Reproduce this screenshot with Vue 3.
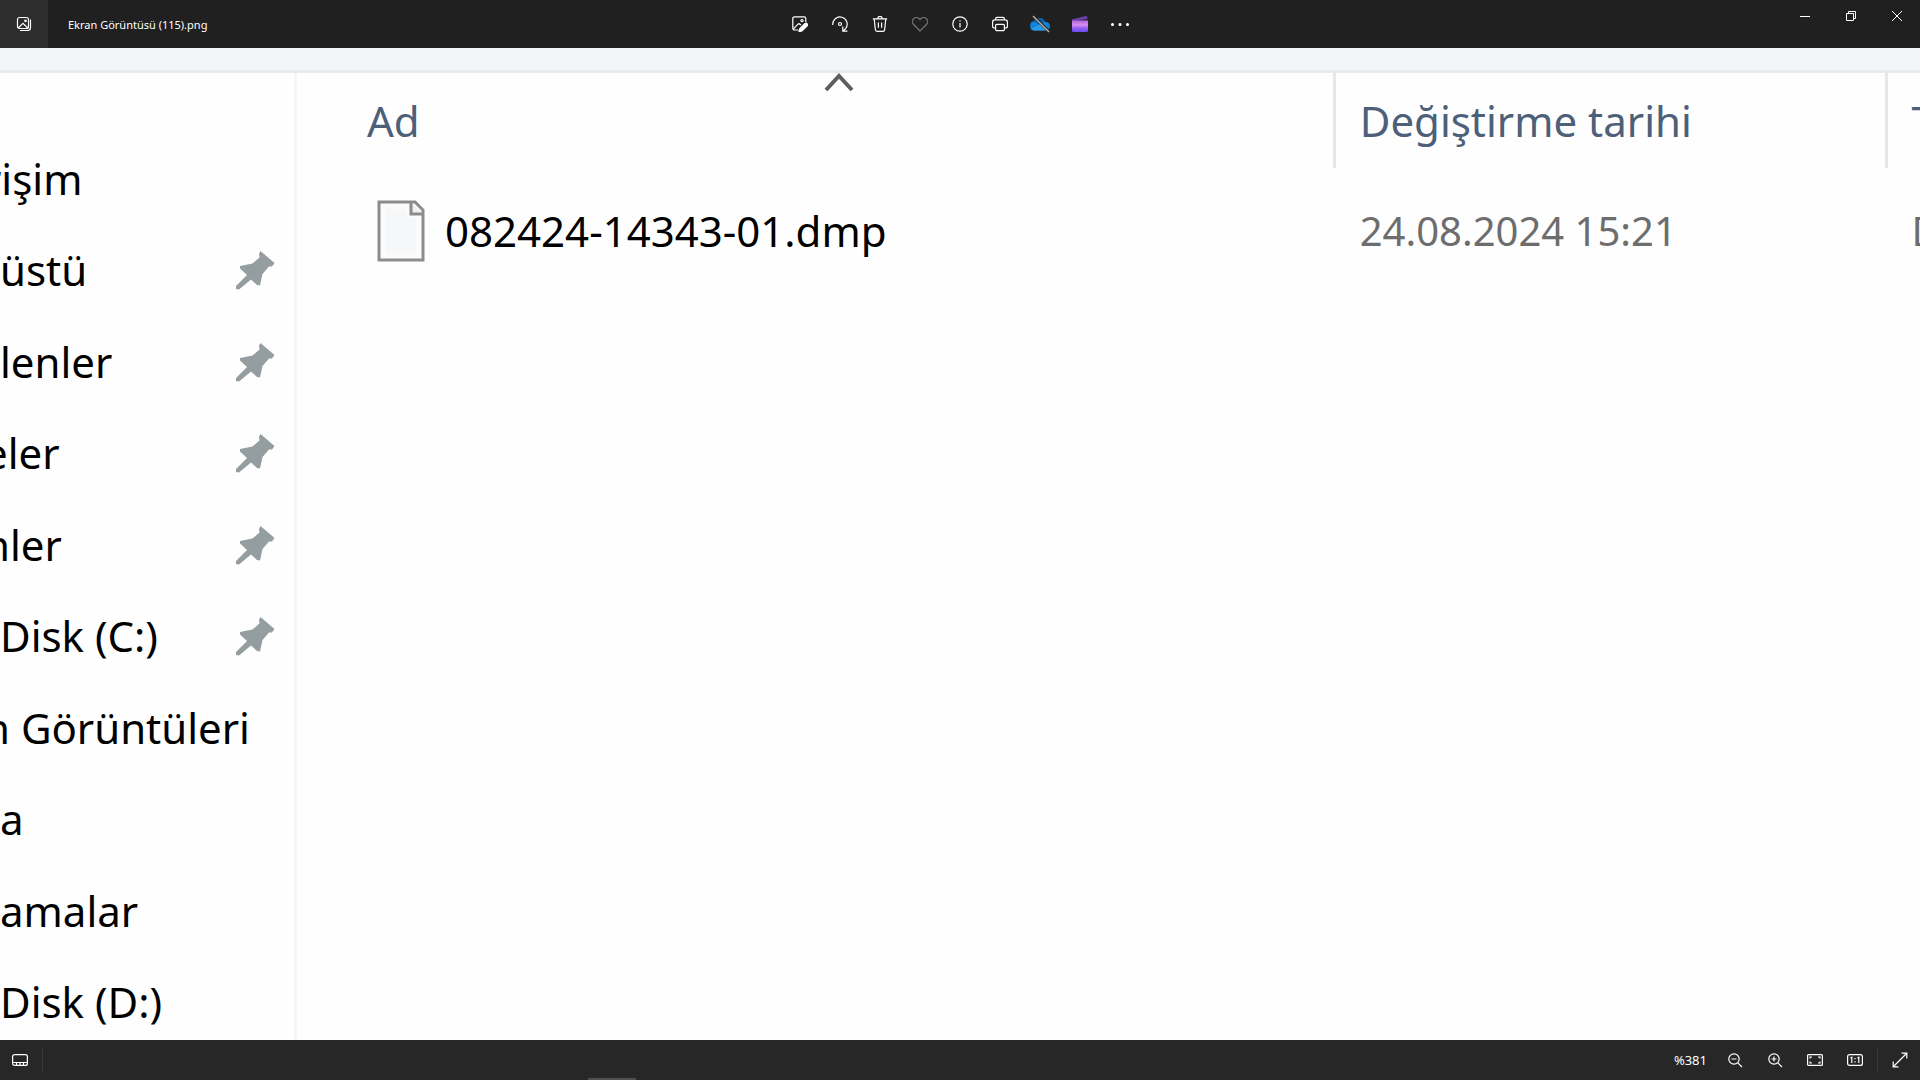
<template>
    <div class="viewer">
        <header class="topbar">
            <div class="topbar-left">
                <button class="gallery-button" aria-label="Tüm fotoğraflar">
                    <svg width="16" height="16" viewBox="0 0 16 16">
                        <rect x="1.5" y="1.5" width="11" height="11" rx="2" />
                        <path d="M2.3 12 L7 7.4 L11.8 12 M14.5 3.5 V11.5 Q14.5 14.5 11.5 14.5 H4" />
                        <circle cx="9.5" cy="4.8" r="0.8" />
                    </svg>
                </button>
                <span class="file-title">Ekran Görüntüsü (115).png</span>
            </div>

            <div class="tools">
                <button class="tool-button" aria-label="Düzenle">
                    <svg width="16" height="16" viewBox="0 0 16 16">
                        <path d="M6.5 14 H2.8 Q0.8 14 0.8 12 V2.6 Q0.8 0.8 2.8 0.8 H12 Q13.8 0.8 13.8 2.6 V6" />
                        <path d="M1.4 12.8 L6 8.2 Q7 7.3 8 8.2 L9 9.2" />
                        <circle cx="10" cy="4.6" r="1.1" />
                        <path class="solid" d="M13 7.4 Q14.2 6.6 15.2 7.8 Q16 8.8 15.2 9.8 L10.2 14.8 L7 15.8 L7.9 12.5 Z" />
                    </svg>
                </button>
                <button class="tool-button" aria-label="Döndür">
                    <svg width="16" height="16" viewBox="0 0 16 16">
                        <path d="M0.8 9 A7.2 7.2 0 1 1 13.6 12.6 L11.2 15 M10.8 10.6 V15.2 H15.4" />
                        <circle cx="8" cy="8" r="1.5" />
                    </svg>
                </button>
                <button class="tool-button" aria-label="Sil">
                    <svg width="16" height="16" viewBox="0 0 16 16">
                        <path d="M0.8 2.8 H15.2 M5.8 2.6 A2.2 2.2 0 0 1 10.2 2.6 M2.2 3 L3.4 13.8 Q3.6 15.3 5 15.3 H11 Q12.4 15.3 12.6 13.8 L13.8 3 M6.4 6.4 V11.8 M9.6 6.4 V11.8" />
                    </svg>
                </button>
                <button class="tool-button dim" aria-label="Sık kullanılanlara ekle" disabled>
                    <svg width="16" height="16" viewBox="0 0 16 16">
                        <path d="M8 15 L1.6 8.5 A4 4 0 0 1 7.2 2.7 L8 3.6 L8.8 2.7 A4 4 0 0 1 14.4 8.5 Z" />
                    </svg>
                </button>
                <button class="tool-button" aria-label="Bilgi">
                    <svg width="16" height="16" viewBox="0 0 16 16">
                        <circle cx="8" cy="8" r="7.2" />
                        <path d="M8 7 V11.6 M8 4.2 V5.6" />
                    </svg>
                </button>
                <button class="tool-button" aria-label="Yazdır">
                    <svg width="16" height="16" viewBox="0 0 16 16">
                        <path d="M3.5 12 H2.5 Q0.6 12 0.6 10 V6 Q0.6 3.8 2.8 3.8 H13.2 Q15.4 3.8 15.4 6 V10 Q15.4 12 13.5 12 H12.5 M3.6 3.6 V2.8 Q3.6 1.4 5 1.4 H11 Q12.4 1.4 12.4 2.8 V3.6" />
                        <rect x="3.6" y="8.4" width="8.8" height="6.2" rx="1" />
                    </svg>
                </button>
                <button class="tool-button" aria-label="OneDrive">
                    <svg class="colored" width="22" height="18" viewBox="0 0 22 18">
                        <path fill="#1482d6" d="M5.2 15.5 A4.7 4.7 0 0 1 5 6.2 A6 6 0 0 1 16 7 A4.3 4.3 0 0 1 17.3 15.5 Z" />
                        <path fill="#0a5fb0" d="M5 6.2 A6 6 0 0 1 16 7 L13 7.6 L10.5 9.8 Z" />
                        <path fill="#2a9be2" d="M1.6 13.7 L11 9.6 L19.6 14.6 Q18.6 15.5 17.3 15.5 H5.2 Q3 15.4 1.6 13.7 Z" />
                        <path stroke="#202020" stroke-width="3" d="M4.5 1 L20.5 17" />
                        <path stroke="#b8b4b0" stroke-width="1.4" d="M4 1 L20 17" />
                    </svg>
                </button>
                <button class="tool-button" aria-label="Video oluştur">
                    <svg class="colored" width="18" height="18" viewBox="0 0 18 18">
                        <defs>
                            <linearGradient id="clip" x1="0" y1="0" x2="0" y2="1">
                                <stop offset="0" stop-color="#b567dc" />
                                <stop offset="0.4" stop-color="#d68cf4" />
                                <stop offset="0.65" stop-color="#9560f0" />
                                <stop offset="1" stop-color="#6b4df0" />
                            </linearGradient>
                        </defs>
                        <path fill="#6d3fa8" d="M1 4.6 L14.5 1 Q16 0.8 16.3 2.2 L16.6 4 L1 6.5 Z" />
                        <path fill="url(#clip)" d="M1 5.6 H17 V15.5 Q17 17 15.5 17 H2.5 Q1 17 1 15.5 Z" />
                    </svg>
                </button>
                <button class="tool-button" aria-label="Daha fazla">
                    <svg width="20" height="16" viewBox="0 0 20 16">
                        <g class="solid">
                            <circle cx="2.5" cy="8.5" r="0.9" />
                            <circle cx="10" cy="8.5" r="0.9" />
                            <circle cx="17.5" cy="8.5" r="0.9" />
                        </g>
                    </svg>
                </button>
            </div>

            <div class="window-controls">
                <button class="window-button" aria-label="Simge durumuna küçült">
                    <svg width="10" height="10" viewBox="0 0 10 10"><path d="M0 5.5 H10" /></svg>
                </button>
                <button class="window-button" aria-label="Önceki boyut">
                    <svg width="10" height="10" viewBox="0 0 10 10"><path d="M0.5 2.5 H7.5 V9.5 H0.5 Z M2.5 2.5 V0.5 H9.5 V7.5 H7.5" /></svg>
                </button>
                <button class="window-button" aria-label="Kapat">
                    <svg width="10" height="10" viewBox="0 0 10 10"><path d="M0 0 L10 10 M10 0 L0 10" /></svg>
                </button>
            </div>
        </header>

        <main class="photo">
            <div class="ribbon-edge"></div>
            <div class="explorer">
                <ul class="sidebar">
                    <li v-for="folder in folders" :key="folder.name" :class="{ cut: folder.cut }">
                        <span>{{ folder.name }}</span>
                        <svg v-if="folder.pinned" class="pin" width="40" height="40" viewBox="0 0 40 40">
                            <path d="M25.5 1 L39.5 13 L37 16.5 L34 16.5 L27.5 24 L25 35.5 L22 35 L16 29.5 L4 39.5 L1 39 L1 36 L12 25 L5 18.5 L5 16 L17.5 13.5 L24.5 7.5 L24 4 Z" />
                        </svg>
                    </li>
                </ul>

                <div class="file-pane">
                    <table class="file-table">
                        <thead>
                            <tr>
                                <th class="col-name">
                                    Ad
                                    <svg class="sort-arrow" width="30" height="20" viewBox="0 0 30 20">
                                        <path d="M2 17 L15 3 L28 17" />
                                    </svg>
                                </th>
                                <th class="col-date">Değiştirme tarihi</th>
                                <th class="col-type">T</th>
                            </tr>
                        </thead>
                        <tbody>
                            <tr v-for="file in files" :key="file.name">
                                <td class="cell-name">
                                    <div class="file-name">
                                        <svg width="48" height="62" viewBox="0 0 48 62">
                                            <path fill="#fbfbfc" stroke="#8c8c8c" stroke-width="3" d="M2 2 H38 L46 10 V60 H2 Z" />
                                            <path fill="#f6f7f9" d="M9 9 H30 V18 H39 V53 H9 Z" />
                                            <path fill="#f0f0f0" stroke="#8c8c8c" stroke-width="3" d="M34 2 V14 H46" />
                                        </svg>
                                        <span>{{ file.name }}</span>
                                    </div>
                                </td>
                                <td class="cell-date">{{ file.date }}</td>
                                <td class="cell-type">{{ file.type }}</td>
                            </tr>
                        </tbody>
                    </table>
                </div>
            </div>
        </main>

        <footer class="bottombar">
            <button class="tool-button" aria-label="Film şeridi">
                <svg width="16" height="12" viewBox="0 0 16 12">
                    <rect x="0.6" y="0.6" width="14.8" height="10.8" rx="2" />
                    <path d="M1 8.5 H15 M4.5 8.5 V11 M8 8.5 V11 M11.5 8.5 V11" />
                </svg>
            </button>
            <span class="divider"></span>
            <span class="zoom-value">%381</span>
            <button class="tool-button" aria-label="Uzaklaştır">
                <svg width="16" height="16" viewBox="0 0 16 16">
                    <circle cx="7" cy="7" r="5.2" />
                    <path d="M10.8 10.8 L15 15 M4.5 7 H9.5" />
                </svg>
            </button>
            <button class="tool-button" aria-label="Yakınlaştır">
                <svg width="16" height="16" viewBox="0 0 16 16">
                    <circle cx="7" cy="7" r="5.2" />
                    <path d="M10.8 10.8 L15 15 M4.5 7 H9.5 M7 4.5 V9.5" />
                </svg>
            </button>
            <button class="tool-button" aria-label="Sığdır">
                <svg width="16" height="12" viewBox="0 0 16 12">
                    <rect x="0.6" y="0.6" width="14.8" height="10.8" rx="1" />
                    <path d="M3 4.5 V3 H5 M11 3 H13 V4.5 M13 7.5 V9 H11 M5 9 H3 V7.5" />
                </svg>
            </button>
            <button class="tool-button" aria-label="Gerçek boyut">
                <svg width="16" height="12" viewBox="0 0 16 12">
                    <rect x="0.6" y="0.6" width="14.8" height="10.8" rx="2" />
                    <path d="M3.4 4 L4.8 3.2 V9 M10.4 4 L11.8 3.2 V9 M8 4 V5.2 M8 7.2 V8.4" />
                </svg>
            </button>
            <span class="divider"></span>
            <button class="tool-button" aria-label="Tam ekran">
                <svg width="16" height="16" viewBox="0 0 16 16">
                    <path d="M1.5 14.5 L14.5 1.5 M9.5 1.2 H14.8 V6.5 M1.2 9.5 V14.8 H6.5" />
                </svg>
            </button>
            <div class="taskbar-hint"></div>
        </footer>
    </div>
</template>

<script setup>
import { ref } from 'vue';

/* cut: the first letter runs out past the left edge */
const folders = ref([
    { name: 'rişim', cut: true, pinned: false },
    { name: 'üstü', cut: false, pinned: true },
    { name: 'lenler', cut: false, pinned: true },
    { name: 'eler', cut: true, pinned: true },
    { name: 'nler', cut: true, pinned: true },
    { name: 'Disk (C:)', cut: false, pinned: true },
    { name: 'n Görüntüleri', cut: true, pinned: false },
    { name: 'a', cut: false, pinned: false },
    { name: 'amalar', cut: false, pinned: false },
    { name: 'Disk (D:)', cut: false, pinned: false },
]);

const files = ref([
    { name: '082424-14343-01.dmp', date: '24.08.2024 15:21', type: 'D' },
]);
</script>

<style>
body {
    margin: 0;
    background-color: #202020;
}
</style>

<style scoped>
.viewer {
    display: flex;
    flex-direction: column;
    height: 100vh;
    overflow: hidden;
    font-family: "Noto Sans", "Open Sans", sans-serif;
    color: #fff;
}

button {
    display: flex;
    align-items: center;
    justify-content: center;
    padding: 0;
    border: none;
    background: none;
    color: inherit;
}

button svg {
    fill: none;
    stroke: currentColor;
    stroke-width: 1.2;
}

button .solid {
    fill: currentColor;
}

button svg.colored {
    stroke: none;
}

/* top bar */
.topbar {
    display: grid;
    grid-template-columns: 1fr auto 1fr;
    height: 48px;
    background-color: #202020;
}

.topbar-left {
    display: flex;
    align-items: center;
    gap: 20px;
}

.gallery-button {
    width: 48px;
    height: 48px;
    background-color: #2d2d2d;
}

.file-title {
    font-size: 11px;
}

.tools {
    display: flex;
}

.tool-button {
    width: 40px;
    height: 100%;
}

.dim {
    color: #777;
}

.window-controls {
    display: flex;
    justify-content: flex-end;
}

.window-button {
    width: 46px;
    height: 32px;
}

.window-button svg {
    stroke-width: 1;
}

/* opened picture */
.photo {
    display: flex;
    flex-direction: column;
    flex: 1;
    min-height: 0;
    background-color: #fefefe;
    color: #000;
    font-size: 42px;
    line-height: 64px;
    overflow: hidden;
}

.ribbon-edge {
    height: 22px;
    background-color: #f4f5f8;
    border-bottom: 3px solid #e9ebeb;
}

.explorer {
    display: flex;
    flex: 1;
    min-height: 0;
}

.sidebar {
    display: flex;
    flex-direction: column;
    justify-content: space-between;
    box-sizing: border-box;
    width: 297px;
    flex-shrink: 0;
    margin: 0;
    padding: 74px 19px 6px 0;
    border-right: 3px solid #f5f6f7;
    list-style: none;
}

.sidebar li {
    display: flex;
    align-items: center;
    justify-content: space-between;
    white-space: nowrap;
}

.sidebar .cut {
    margin-left: -16px;
}

.pin {
    fill: #949da0;
}

.file-pane {
    flex: 1;
    min-width: 0;
    overflow: hidden;
}

.file-table {
    width: 100%;
    table-layout: fixed;
    border-collapse: separate;
    border-spacing: 0;
}

.file-table th {
    box-sizing: border-box;
    height: 95px;
    padding: 0 0 0 24px;
    border-right: 3px solid #e6e7e8;
    color: #4c607a;
    font-weight: normal;
    text-align: left;
    white-space: nowrap;
}

.file-table .col-name {
    position: relative;
    width: 64%;
    padding-left: 70px;
}

.file-table .col-date {
    width: 34%;
}

.file-table .col-type {
    border-right: none;
}

.sort-arrow {
    position: absolute;
    top: 0;
    left: 48px;
    right: 0;
    margin: 0 auto;
    fill: none;
    stroke: #5e5e5e;
    stroke-width: 4;
}

.file-table td {
    height: 126px;
    padding: 0 0 0 24px;
    white-space: nowrap;
}

.file-table .cell-name {
    padding-left: 80px;
}

.file-name {
    display: flex;
    align-items: center;
    gap: 20px;
}

.file-table .cell-date,
.file-table .cell-type {
    color: #6d6d6d;
    font-size: 40px;
}

/* bottom bar */
.bottombar {
    position: relative;
    display: flex;
    align-items: center;
    height: 40px;
    background-color: #272727;
}

.divider {
    width: 1px;
    height: 26px;
    margin: 0 2px;
    background-color: #3a3a3a;
}

.zoom-value {
    margin-left: auto;
    padding-right: 8px;
    font-size: 13px;
}

.taskbar-hint {
    position: absolute;
    left: 588px;
    bottom: 0;
    width: 48px;
    height: 2px;
    background-color: #505050;
}
</style>
